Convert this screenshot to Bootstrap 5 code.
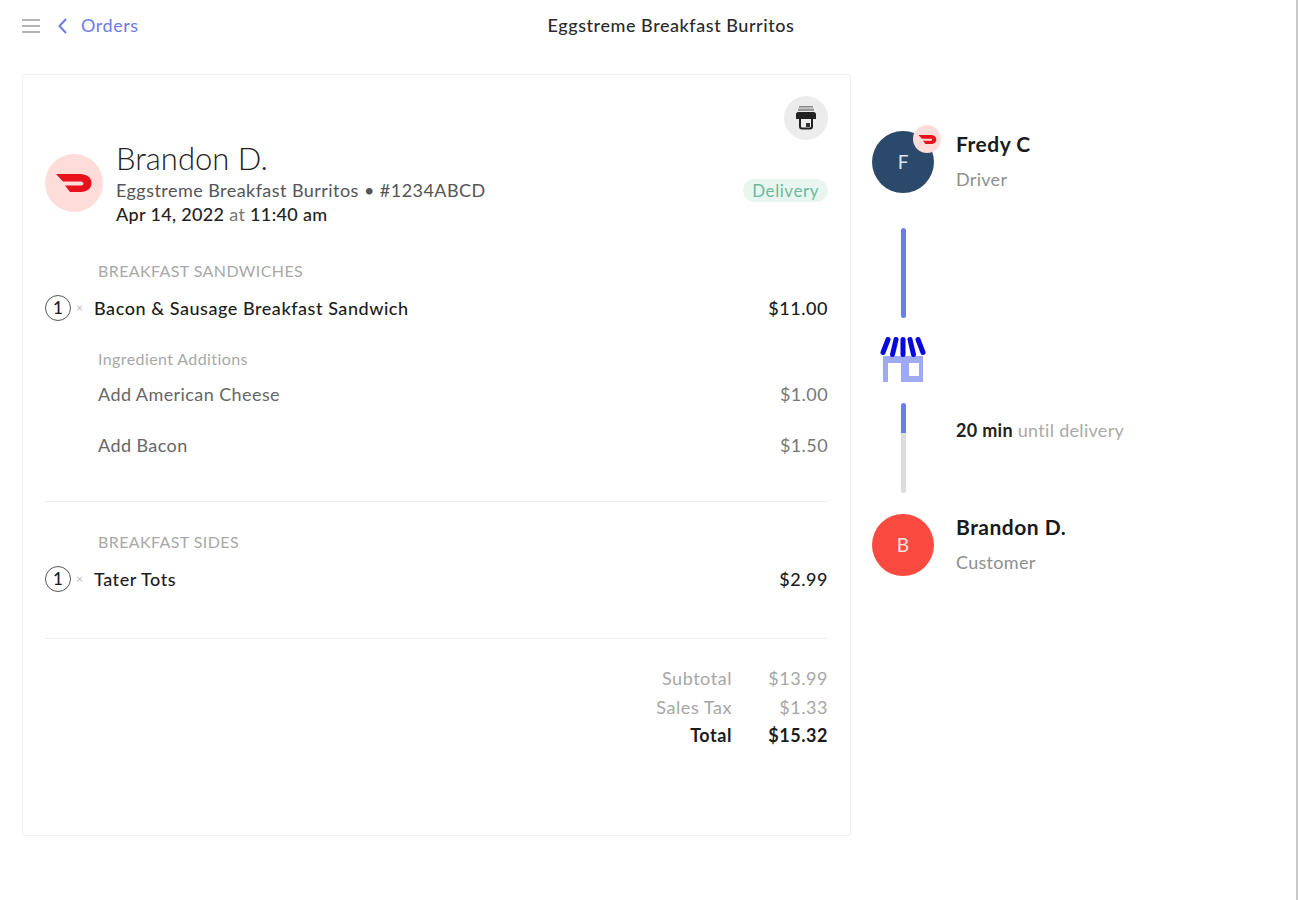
<!DOCTYPE html>
<html lang="en">
<head>
<meta charset="utf-8">
<title>Eggstreme Breakfast Burritos</title>
<link href="https://cdn.jsdelivr.net/npm/bootstrap@5.3.0/dist/css/bootstrap.min.css" rel="stylesheet">
<style>
html,body{height:100%}
body{font-family:"Lato","Liberation Sans",sans-serif;color:#1c1c1c;background:#fff;width:1298px;height:900px;overflow:hidden;font-size:18px;line-height:1.2;letter-spacing:.55px}
.shell{height:900px;border-right:2px solid #c9c9c9;padding:0 0 0 22px}
.topbar{height:52px;padding-right:0}
.burger{width:18px;height:16px;color:#b4b4b4}
.back{color:#6a7ce8;text-decoration:none;font-size:18px;margin-left:17px}
.back-chevron{margin-right:13px}
.page-title{position:absolute;left:0;width:1342px;text-align:center;font-size:18px;font-weight:500;color:#2a2a2a;pointer-events:none}
.main-area{margin-top:22px;gap:21px}
.order-panel{width:829px;height:762px;border:1px solid #f0f0f0;border-radius:3px;padding:21px 22px 0 22px;flex:none}
.print-btn{width:44px;height:44px;border-radius:50%;background:#ececec;border:0;padding:0}
.dash-logo{width:58px;height:58px;border-radius:50%;background:#fddcda;flex:none;margin-right:13px}
.cust-name{font-size:31px;line-height:36px;font-weight:300;color:#222;letter-spacing:0}
.sub-line{font-size:18px;line-height:24px;color:#555;letter-spacing:.45px;margin-top:2px}
.date-line{font-size:18px;line-height:24px;color:#222;letter-spacing:.33px;font-weight:500}
.date-line span{color:#777;font-weight:400}
.tag-delivery{background:#e9f6f0;color:#6db99b;font-size:17px;line-height:23px;border-radius:12px;padding:0 9px;margin-bottom:24px}
.sect-label{color:#a8a8a8;font-size:16px;line-height:20px;padding-left:53px;letter-spacing:.4px}
.item-row{line-height:24px;color:#1c1c1c;font-weight:500}
.qty{width:26px;height:26px;border:1px solid #555;border-radius:50%;font-size:17px;line-height:24px;text-align:center;flex:none;letter-spacing:0}
.times{color:#bbb;font-size:12px;width:23px;padding-left:5px;flex:none;font-weight:400}
.add-row{padding-left:53px;color:#666;line-height:24px;letter-spacing:.42px}
.add-row .amt{color:#777}
.sep{border-top:1px solid #efefef;opacity:1;margin:0}
.total-grid{display:grid;grid-template-columns:auto 96px;justify-content:end;text-align:right;line-height:29px;color:#a6a6a6}
.total-strong{color:#1c1c1c;font-weight:700;margin-top:-1px}
.track{width:62px;flex:none}
.avatar{width:62px;height:62px;border-radius:50%;color:#fff;font-size:19px;letter-spacing:0}
.av-driver{background:#2b4a6b;color:#dfe5ec}
.av-cust{background:#fb4a40;color:#ffe3e0}
.mini-logo{position:absolute;top:-6px;right:-7px;width:28px;height:28px;border-radius:50%;background:#fddcda}
.person-copy{margin-left:22px}
.person-name{font-size:21px;line-height:26px;font-weight:700;color:#1a1a1a;letter-spacing:.5px}
.person-role{font-size:18px;line-height:26px;color:#8e8e8e;margin-top:9px;letter-spacing:.3px}
.bar{width:5px;border-radius:3px;background:#6a7de8}
.bar-top{border-radius:3px 3px 0 0}
.bar-gray{background:#dcdcdc;border-radius:0 0 3px 3px}
.until{font-size:18px;color:#a9a9a9;letter-spacing:.3px}
.until b{color:#222}
</style>
</head>
<body>
<div class="shell">
  <header class="topbar d-flex align-items-center">
    <svg class="burger" viewBox="0 0 18 16" aria-hidden="true"><path d="M0 2h18M0 8h18M0 14h18" stroke="currentColor" stroke-width="2"/></svg>
    <a class="back d-flex align-items-center" href="#"><svg width="11" height="18" viewBox="0 0 11 18" class="back-chevron" aria-hidden="true"><path d="M9 2 2.500 9 9 16" fill="none" stroke="currentColor" stroke-width="2"/></svg>Orders</a>
    <div class="page-title">Eggstreme Breakfast Burritos</div>
  </header>
  <main class="main-area d-flex">
    <section class="order-panel">
      <div class="d-flex justify-content-end">
        <button class="print-btn d-flex align-items-center justify-content-center" aria-label="Print">
          <svg width="24" height="26" viewBox="0 0 24 26" aria-hidden="true"><rect x="5" y="1" width="14" height="1.500" fill="#888"/><rect x="4" y="3.500" width="16" height="2.500" fill="#999"/><path d="M2 9.500A2.500 2.500 0 0 1 4.500 7h15A2.500 2.500 0 0 1 22 9.500V14H2z" fill="#222"/><path d="M6 13h12v8.500a2 2 0 0 1-2 2H8a2 2 0 0 1-2-2z" fill="#eee" stroke="#222" stroke-width="2"/><rect x="12" y="18" width="4" height="4" fill="#333"/></svg>
        </button>
      </div>
      <div class="d-flex align-items-end justify-content-between">
        <div class="d-flex align-items-center">
          <div class="dash-logo d-flex align-items-center justify-content-center">
            <svg width="38" height="22" viewBox="0 0 38 22" aria-hidden="true"><path d="M1 2h24c7 0 11.500 3.500 11.500 9S32 20 26 20H15L10 13.500h16c1.500 0 2.500-1 2.500-2s-1-2-2.500-2H8z" fill="#e8111c"/></svg>
          </div>
          <div>
            <div class="cust-name">Brandon D.</div>
            <div class="sub-line">Eggstreme Breakfast Burritos • #1234ABCD</div>
            <div class="date-line">Apr 14, 2022 <span>at</span> 11:40 am</div>
          </div>
        </div>
        <div class="tag-delivery">Delivery</div>
      </div>

      <div class="sect-label" style="margin-top:35px">BREAKFAST SANDWICHES</div>
      <div class="item-row d-flex align-items-center" style="margin-top:14px">
        <div class="qty">1</div><div class="times">×</div>
        <div class="flex-grow-1">Bacon &amp; Sausage Breakfast Sandwich</div><div>$11.00</div>
      </div>
      <div class="sect-label" style="margin-top:28px;">Ingredient Additions</div>
      <div class="add-row d-flex justify-content-between" style="margin-top:13px"><span>Add American Cheese</span><span class="amt">$1.00</span></div>
      <div class="add-row d-flex justify-content-between" style="margin-top:27px"><span>Add Bacon</span><span class="amt">$1.50</span></div>
      <hr class="sep" style="margin-top:44px">
      <div class="sect-label" style="margin-top:30px">BREAKFAST SIDES</div>
      <div class="item-row d-flex align-items-center" style="margin-top:14px">
        <div class="qty">1</div><div class="times">×</div>
        <div class="flex-grow-1">Tater Tots</div><div>$2.99</div>
      </div>
      <hr class="sep" style="margin-top:46px">
      <div class="total-grid" style="margin-top:25px">
        <div>Subtotal</div><div>$13.99</div>
        <div>Sales Tax</div><div>$1.33</div>
        <div class="total-strong">Total</div><div class="total-strong">$15.32</div>
      </div>
    </section>

    <aside class="d-flex flex-column" style="padding-top:57px">
      <div class="d-flex">
        <div class="track position-relative"><div class="avatar av-driver d-flex align-items-center justify-content-center">F</div>
          <div class="mini-logo d-flex align-items-center justify-content-center"><svg width="19" height="11" viewBox="0 0 38 22" aria-hidden="true"><path d="M1 2h24c7 0 11.500 3.500 11.500 9S32 20 26 20H15L10 13.500h16c1.500 0 2.500-1 2.500-2s-1-2-2.500-2H8z" fill="#e8111c"/></svg></div>
        </div>
        <div class="person-copy"><div class="person-name">Fredy C</div><div class="person-role">Driver</div></div>
      </div>
      <div class="track d-flex justify-content-center" style="margin-top:35px"><div class="bar" style="height:90px"></div></div>
      <div class="track d-flex justify-content-center" style="margin-top:19px">
        <svg width="46" height="46" viewBox="0 0 46 46" aria-hidden="true">
          <path fill-rule="evenodd" d="M3 19h40v26H3zM8 26v19h13V26zM29 26v13h10V26z" fill="#9eaaf6"/>
          <path d="M8 2.500 3 15.500M16 2.500l-3.500 15M23 2.500v15M30 2.500l3.500 15M38 2.500l5 13" fill="none" stroke="#0707e0" stroke-width="5" stroke-linecap="round"/>
        </svg>
      </div>
      <div class="d-flex" style="margin-top:20px">
        <div class="track d-flex flex-column align-items-center"><div class="bar bar-top" style="height:30px"></div><div class="bar bar-gray" style="height:60px"></div></div>
        <div class="person-copy until" style="margin-top:17px"><b>20 min</b> until delivery</div>
      </div>
      <div class="d-flex" style="margin-top:21px">
        <div class="track"><div class="avatar av-cust d-flex align-items-center justify-content-center">B</div></div>
        <div class="person-copy"><div class="person-name">Brandon D.</div><div class="person-role">Customer</div></div>
      </div>
    </aside>
  </main>
</div>
</body>
</html>
